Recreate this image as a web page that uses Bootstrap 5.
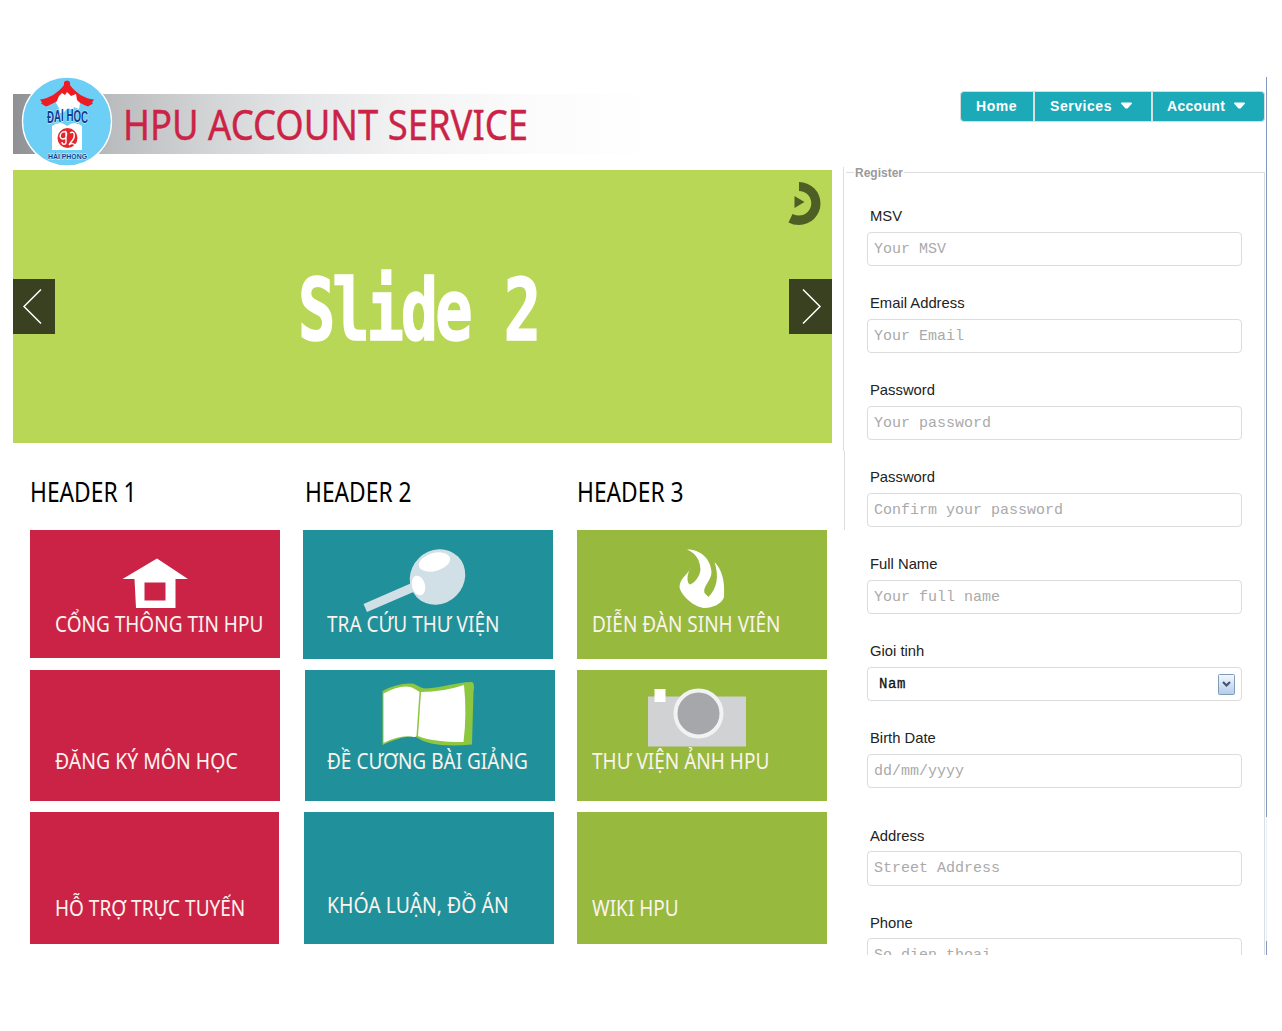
<!DOCTYPE html>
<html lang="vi">
<head>
<meta charset="utf-8">
<meta name="viewport" content="width=device-width, initial-scale=1">
<title>HPU Account Service</title>
<link href="https://cdn.jsdelivr.net/npm/bootstrap@5.3.0/dist/css/bootstrap.min.css" rel="stylesheet">
<style>
body{background:#fff;font-family:"Liberation Sans",Arial,sans-serif;color:#222;overflow:hidden}
.page{width:1268px;height:878px;margin-top:77px;padding-left:13px;overflow:hidden}
.main-col{width:819px;flex:none}
.side-col{width:436px;flex:none;position:relative}
.brand-bar{height:60px;margin-top:17px;width:640px;background:linear-gradient(90deg,#8f9094 0,#bcbdbf 16%,#d2d3d5 30%,#e6e7e8 46%,#f3f3f4 62%,#fbfbfb 80%,#fff 100%)}
.brand-logo{width:92px;height:92px;margin:-18px 0 0 8px;flex:none}
.brand-title,.tile-cap,.col-title{font-family:"Noto Sans","Open Sans",sans-serif;white-space:nowrap;line-height:1}
.fitx{display:inline-block;transform-origin:0 50%;transform:scaleX(.905)}
.brand-title{font-size:42px;color:#cb2346;margin:9px 0 0 10px}
.brand-title .fitx{transform:scaleX(.867);-webkit-text-stroke:.4px #cb2346}
.slider{height:273px;margin-top:16px;background:#b9d757;position:relative}
.slide-text{font:bold 85px/1 "DejaVu Sans Mono",monospace;color:#fff;white-space:nowrap;margin:98px 0 0 285px;display:inline-block;transform-origin:0 50%;transform:scaleX(.73);letter-spacing:-4.2px;-webkit-text-stroke:1.5px #fff}
.slide-btn{position:absolute;top:109px;width:42px;height:55px;background:#3a4120;border:0;padding:0}
.slide-btn.next{right:0;width:43px}.slide-btn.prev{left:0}
.slide-btn svg{display:block}
.timer{position:absolute;left:775px;top:11px}
.tile-cols{padding-left:17px}
.tile-col{width:250px;flex:none}
.c2{margin-left:24px}.c3{margin-left:23px}
.col-title{font-size:26.5px;color:#000;height:31px;margin:36px 0 20px}
.col-title .fitx{transform:scaleX(.86)}
.c2 .col-title{padding-left:1px}
.tile{width:250px;height:131px;margin-bottom:11px;position:relative;padding:0 0 29px 24px;display:flex;align-items:flex-end}
.tile-cap{color:#fbf3ee;font-size:21px;position:relative;flex:none}
.red{background:#cb2346}.teal{background:#20919b}.lime{background:#96b93e}
.tile svg{position:absolute;left:0;top:0}
.t1{height:129px;padding-bottom:24px}.red.t1{height:128px;padding-bottom:23px;margin-bottom:12px}
.t3{height:132px;padding-bottom:25px}.teal.t3{padding-bottom:28px;padding-left:23px}.red.t3{width:249px}
.teal.t1{margin-left:-1px}.teal.t2{margin-left:1px;padding-left:22px}
.lime{padding-left:15px}.red{padding-left:25px}
.wide .fitx{transform:scaleX(.925)}
.top-nav{margin:14px 3px 0 0;height:31px;width:305px;border:1px solid #d6dcdc;border-radius:4px;background:#1caab9;overflow:hidden}
.top-nav a{color:#fff;font-weight:bold;font-size:14px;text-decoration:none;display:flex;align-items:center;padding-left:15px;letter-spacing:.55px;white-space:nowrap}
.top-nav a:nth-child(1){width:72px}.top-nav a:nth-child(2){width:118px;padding-left:15px}.top-nav a:nth-child(3){flex:1;letter-spacing:.3px;padding-left:14px}
.top-nav a+a{border-left:2px solid #d9dfdf}
.top-nav svg{margin:-2px 0 0 9px}
.reg{margin:50px 3px 0 12px;position:relative}
.reg-legend{font-size:12px;font-weight:bold;color:#9a9a9a;line-height:14px;height:14px;margin:-7px 0 28px 10px;padding:0 1px;background:#fff;display:table}
.reg-line{height:1px;background:#ddd;margin-left:2px}
.reg label{font-size:14.8px;line-height:16px;display:block;margin:0 0 8px 3px;color:#222}
.fld{height:34px;border:1px solid #dcdcdc;border-radius:4px;width:375px;font-family:"Liberation Mono",monospace;font-size:15px;padding:0 0 0 6px;color:#111;background:#fff;display:block;appearance:none}
.fld::placeholder{color:#aaa;opacity:1}
select.fld{padding:1px 0 0 11px;font-size:14px;letter-spacing:.6px;-webkit-text-stroke:.3px #111}
.grp{margin:0 0 29px 23px;width:375px;position:relative}
.grp-gap{margin-bottom:40px}
.grp-gap+.grp label{margin-bottom:7px}
.grp-gap+.grp .fld{height:35px}
.grp:last-child label{margin-bottom:7px}
.drop{position:absolute;right:7px;bottom:6px}
.v1{position:absolute;left:11px;top:90px;width:1px;height:284px;background:#ddd}
.v2{position:absolute;left:12px;top:374px;width:1px;height:79px;background:#ddd}
.v3{position:absolute;right:3px;top:95px;width:1px;height:783px;background:#dcdde0}
.scroll-edge{position:absolute;right:1px;top:0;width:1px;height:878px;background:linear-gradient(#8498bd 0 740px,#e4effc 740px 864px,#8498bd 864px)}
</style>
<script src="https://cdn.jsdelivr.net/npm/bootstrap@5.3.0/dist/js/bootstrap.bundle.min.js"></script>
</head>
<body>
<div class="page d-flex">
<main class="main-col">
<header class="brand-bar d-flex">
<svg class="brand-logo" viewBox="0 0 92 92"><circle cx="46" cy="45.500" r="44.500" fill="#6dcff6" stroke="#fff" stroke-width="1.3"/>
<path d="M19 23.500C28 22.500 37 17 43 9l0-3q3-3 6 0v3c6 8 14 13.500 24 14.500l-2 3 1 1-5 3C58 27 52 23 46 18 40 23 34 27 25 30.500l-5-3 1-1z" fill="#ed1c24"/><path d="M35 27l3-7 3-3 3 2 2-3 4 4 5-2 1 6 3 3-1 6-5-2-1 3-5-2-4 4-4 1-1-5z" fill="#fff"/>
<g font-family="Liberation Sans,sans-serif" font-weight="bold" fill="#0b3d91"><text x="26" y="46" dy="1 -1.500 -1 0 0 1 1" font-size="16.500" textLength="41" lengthAdjust="spacingAndGlyphs" stroke="#e6f6ff" stroke-width="1" paint-order="stroke">ĐẠI HỌC</text><text x="27" y="82.500" font-size="7.8" textLength="39" lengthAdjust="spacingAndGlyphs" stroke="#dff" stroke-width=".8" paint-order="stroke">HẢI PHÒNG</text></g>
<path d="M31 50q8-6 15 0q8-6 15 0v24H31z" fill="#fff"/><circle cx="46.500" cy="62" r="10" fill="#e5242b"/><path d="M45 56c-6-2-8 7-3 7 4 0 4-6 3-7v10c0 3-4 3-4 0m8-9c5-3 6 4 1 9l-2 3q3-3 6 0" fill="none" stroke="#fff" stroke-width="1.4"/></svg>
<div class="brand-title"><span class="fitx">HPU ACCOUNT SERVICE</span></div>
</header>
<section class="slider">
<div class="slide-text">Slide 2</div>
<svg class="timer" width="34" height="46" viewBox="0 0 34 46"><path d="M11 1A21.500 21.500 0 0 1 11 44Q5 44 .5 41.500L4.500 33Q8 34.500 11 34.500A12 12 0 0 0 11 10z" fill="#4d5f25"/><path d="M6.500 15v12l10-6z" fill="#4d5f25"/></svg>
<button class="slide-btn prev" aria-label="Previous"><svg width="42" height="55"><path d="M28 10.500L11 27.500l17 17" fill="none" stroke="#fff" stroke-width="1.500"/></svg></button>
<button class="slide-btn next" aria-label="Next"><svg width="43" height="55"><path d="M14 10.500l17 17-17 17" fill="none" stroke="#fff" stroke-width="1.500"/></svg></button>
</section>
<section class="tile-cols d-flex">
<div class="tile-col c1"><div class="col-title"><span class="fitx">HEADER 1</span></div>
<div class="tile red t1"><svg width="250" height="128"><path d="M92.500 49L127 28.500 158 49H145.500V78H106L104.500 49z" fill="#fff"/><path d="M114.500 52.500h21v18h-21z" fill="#cb2346"/></svg><span class="tile-cap fitx">CỔNG THÔNG TIN HPU</span></div>
<div class="tile red t2 wide"><span class="tile-cap fitx">ĐĂNG KÝ MÔN HỌC</span></div>
<div class="tile red t3"><span class="tile-cap fitx">HỖ TRỢ TRỰC TUYẾN</span></div></div>
<div class="tile-col c2"><div class="col-title"><span class="fitx">HEADER 2</span></div>
<div class="tile teal t1"><svg width="250" height="129"><path d="M60.500 74L111 52l4 8-51 22z" fill="#d1e0e6"/><ellipse cx="134.500" cy="47" rx="29" ry="26.500" transform="rotate(-45 134.500 47)" fill="#d1e0e6"/><ellipse cx="131.500" cy="32" rx="16" ry="9" transform="rotate(-15 131.500 32)" fill="#fff"/><ellipse cx="115.500" cy="55.500" rx="6.500" ry="10" transform="rotate(-15 115.500 55.500)" fill="#fff"/></svg><span class="tile-cap fitx">TRA CỨU THƯ VIỆN</span></div>
<div class="tile teal t2"><svg width="250" height="131"><path d="M77.500 21Q92 13 106 13.500C113 14 113 18 121 18.500 136 18 152 12 167 12q3 1 1.500 10L167 74.500Q126 78 112 67.500q-4-2-8-1Q92 68 77.500 75z" fill="#8dc63f"/><path d="M78.500 23.500Q96 14 107 17.500q6 3 7.500 4.500l-3 43.500q-1 2-2.500 1.500Q96 64 78.500 73zM116 22q22 0 43-7 3 29-.500 57-31 0-45.500-6z" fill="#fff"/></svg><span class="tile-cap fitx">ĐỀ CƯƠNG BÀI GIẢNG</span></div>
<div class="tile teal t3 wide"><span class="tile-cap fitx">KHÓA LUẬN, ĐỒ ÁN</span></div></div>
<div class="tile-col c3"><div class="col-title"><span class="fitx">HEADER 3</span></div>
<div class="tile lime t1"><svg width="250" height="129"><path d="M110 19.500C123 19 134 29 134.500 42c0 9-9 14-7 21l4 4c8-8 11-20 6-35 8 8 10.500 20 9.500 35-2 7-12 11-19 11-8 0-22-9-25.500-20.500 0-10 10-14 11.500-20.500-5 9-4 16-1 17.500 4-1 10-8 10.500-15C123 31 120 24 110 19.500z" fill="#fff"/></svg><span class="tile-cap fitx">DIỄN ĐÀN SINH VIÊN</span></div>
<div class="tile lime t2"><svg width="250" height="131"><path d="M71 26.500h98v50H71z" fill="#d1d2d4"/><path d="M77.500 19h11v13h-11z" fill="#fff"/><circle cx="121.500" cy="43.500" r="23" fill="#a5a7aa" stroke="#f2f2f3" stroke-width="4"/></svg><span class="tile-cap fitx">THƯ VIỆN ẢNH HPU</span></div>
<div class="tile lime t3"><span class="tile-cap fitx">WIKI HPU</span></div></div>
</section>
</main>
<aside class="side-col">
<div class="d-flex justify-content-end"><nav class="top-nav d-flex">
<a href="#">Home</a><a href="#">Services<svg width="11" height="7"><path d="M0 1.500Q0 .5 1 .5h9q1 0 1 1L6.500 6.500h-2z" fill="#fff"/></svg></a><a href="#">Account<svg width="11" height="7"><path d="M0 1.500Q0 .5 1 .5h9q1 0 1 1L6.500 6.500h-2z" fill="#fff"/></svg></a></nav></div>
<form class="reg"><div class="reg-line"></div><div class="reg-legend">Register</div>
<div class="grp"><label>MSV</label><input class="fld" placeholder="Your MSV"></div>
<div class="grp"><label>Email Address</label><input class="fld" placeholder="Your Email"></div>
<div class="grp"><label>Password</label><input class="fld" placeholder="Your password"></div>
<div class="grp"><label>Password</label><input class="fld" placeholder="Confirm your password"></div>
<div class="grp"><label>Full Name</label><input class="fld" placeholder="Your full name"></div>
<div class="grp"><label>Gioi tinh</label><select class="fld"><option>Nam</option></select>
<svg class="drop" width="17" height="21"><defs><linearGradient id="g" x2="0" y2="1"><stop stop-color="#f4f8ff"/><stop offset="1" stop-color="#b4cbea"/></linearGradient></defs><rect x=".5" y=".5" width="16" height="20" rx="1" fill="url(#g)" stroke="#7f9db9"/><path d="M5 8l3.500 3.500L12 8" fill="none" stroke="#42566f" stroke-width="2.200"/></svg></div>
<div class="grp grp-gap"><label>Birth Date</label><input class="fld" placeholder="dd/mm/yyyy"></div>
<div class="grp"><label>Address</label><input class="fld" placeholder="Street Address"></div>
<div class="grp"><label>Phone</label><input class="fld" placeholder="So dien thoai"></div>
</form>
<i class="v1"></i><i class="v2"></i><i class="v3"></i><i class="scroll-edge"></i>
</aside>
</div>
</body>
</html>
